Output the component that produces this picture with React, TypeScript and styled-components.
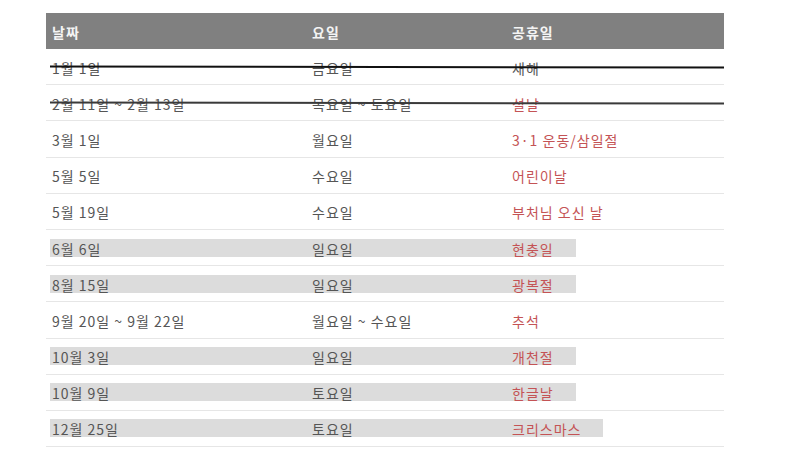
import React from 'react'
import styled, { createGlobalStyle } from 'styled-components'

type Holiday = {
  date: string
  day: string
  name: string
  red?: boolean
  marked?: boolean
  strike?: string
}

const holidays: Holiday[] = [
  { date: '1월 1일', day: '금요일', name: '새해', strike: '#111' },
  { date: '2월 11일 ~ 2월 13일', day: '목요일 ~ 토요일', name: '설날', red: true, strike: '#3a3a3a' },
  { date: '3월 1일', day: '월요일', name: '3·1 운동/삼일절', red: true },
  { date: '5월 5일', day: '수요일', name: '어린이날', red: true },
  { date: '5월 19일', day: '수요일', name: '부처님 오신 날', red: true },
  { date: '6월 6일', day: '일요일', name: '현충일', red: true, marked: true },
  { date: '8월 15일', day: '일요일', name: '광복절', red: true, marked: true },
  { date: '9월 20일 ~ 9월 22일', day: '월요일 ~ 수요일', name: '추석', red: true },
  { date: '10월 3일', day: '일요일', name: '개천절', red: true, marked: true },
  { date: '10월 9일', day: '토요일', name: '한글날', red: true, marked: true },
  { date: '12월 25일', day: '토요일', name: '크리스마스', red: true, marked: true },
]

function App() {
  return (
    <>
      <GlobalStyle />
      <Page>
        <Table>
          <HeadRow>
            <Band>
              <span>날짜</span>
              <span>요일</span>
              <span>공휴일</span>
            </Band>
          </HeadRow>
          {holidays.map((h) => (
            <Row key={h.date} $strike={h.strike}>
              <Band $marked={h.marked}>
                <Cell>{h.date}</Cell>
                <Cell>{h.day}</Cell>
                <Cell $red={h.red}>{h.name}</Cell>
              </Band>
            </Row>
          ))}
        </Table>
      </Page>
    </>
  )
}

const GlobalStyle = createGlobalStyle`
  body {
    margin: 0;
    background: #fff;
    font-family: "Noto Sans CJK KR", "Noto Sans", sans-serif;
  }
`

const Page = styled.main`
  padding: 13px 0 0 46px;
`

const Table = styled.div`
  width: 678px;
  display: flex;
  flex-direction: column;
`

const Band = styled.div<{ $marked?: boolean }>`
  display: grid;
  grid-template-columns: 260px 200px auto;
  align-items: center;
  margin-left: 4px;
  padding: 0 ${(p) => (p.$marked ? '22px' : '0')} 0 2px;
  height: 18px;
  background: ${(p) => (p.$marked ? '#dcdcdc' : 'transparent')};
`

const HeadRow = styled.div`
  display: flex;
  align-items: center;
  height: 36px;
  background: #808080;
  color: #f4f4f4;
  font-size: 14px;
  font-weight: bold;
  letter-spacing: 1px;
`

const Row = styled.div<{ $strike?: string }>`
  position: relative;
  display: flex;
  align-items: center;
  height: 35.2px;
  border-bottom: 1px solid #e6e6e6;
  font-size: 14px;
  letter-spacing: 1px;
  color: #555;

  &::after {
    content: '';
    display: ${(p) => (p.$strike ? 'block' : 'none')};
    position: absolute;
    left: 4px;
    right: 0;
    top: 17px;
    height: 2px;
    background: ${(p) => p.$strike || 'transparent'};
    transform: rotate(0.08deg);
  }
`

const Cell = styled.span<{ $red?: boolean }>`
  white-space: nowrap;
  color: ${(p) => (p.$red ? '#c45355' : '#555')};
`

export default App
